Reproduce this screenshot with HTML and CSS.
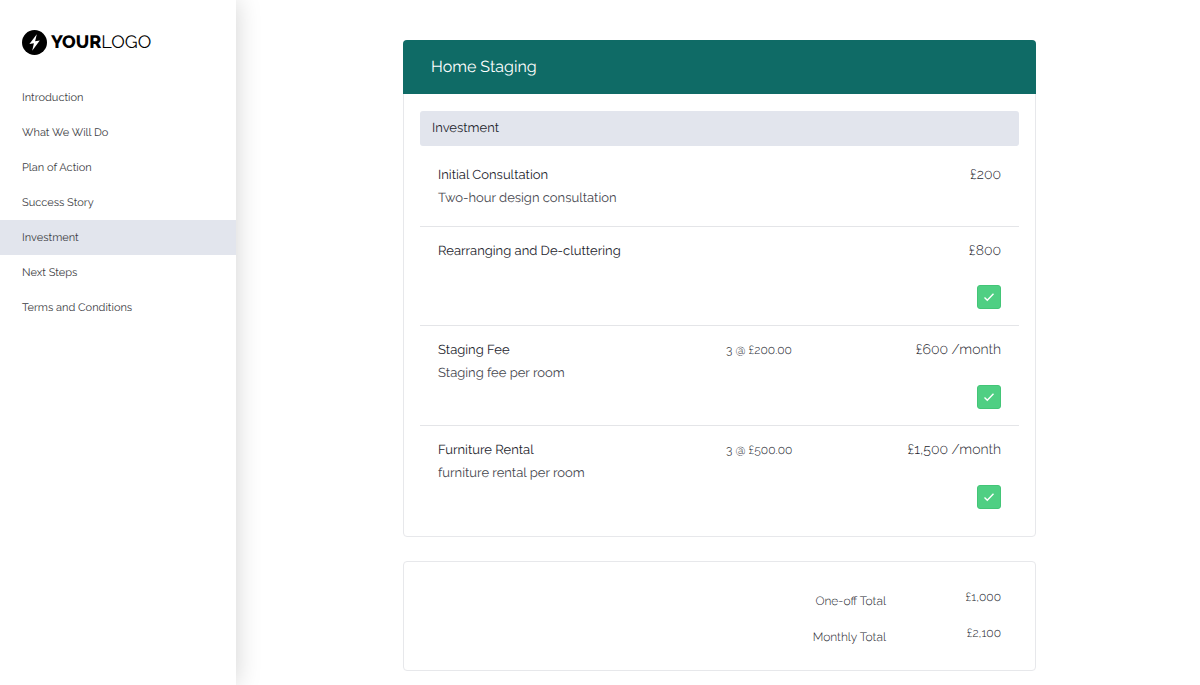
FILE: index.html
```
<!DOCTYPE html>
<html lang="en">
<head>
<meta charset="utf-8">
<meta name="viewport" content="width=device-width, initial-scale=1">
<title>Home Staging</title>
<link rel="stylesheet" href="styles.css">
</head>
<body>
<div class="layout">
  <aside class="sidebar">
    <a class="logo" href="#">
      <svg class="logo-mark" viewBox="0 0 25 25" aria-hidden="true"><circle cx="12.5" cy="12.5" r="12.5" fill="#000"/><path d="M14.8 4.2 7.4 13.9l4.5-.6-1.7 7.4 7.6-10.1-4.7.7z" fill="#fff"/></svg>
      <span class="logo-text"><b>YOUR</b>LOGO</span>
    </a>
    <nav class="menu">
      <a href="#">Introduction</a>
      <a href="#">What We Will Do</a>
      <a href="#">Plan of Action</a>
      <a href="#">Success Story</a>
      <a class="active" href="#" aria-current="page">Investment</a>
      <a href="#">Next Steps</a>
      <a href="#">Terms and Conditions</a>
    </nav>
  </aside>
  <main class="content">
    <section class="card">
      <h1 class="card-title">Home Staging</h1>
      <div class="card-body">
        <h2 class="section-title">Investment</h2>
        <ul class="items">
          <li class="item">
            <div class="details"><div class="name" id="item-1">Initial Consultation</div><div class="note">Two-hour design consultation</div></div>
            <div class="price">£200</div>
          </li>
          <li class="item">
            <div class="details"><div class="name" id="item-2">Rearranging and De-cluttering</div></div>
            <div class="price">£800</div>
            <div class="option"><input class="check" type="checkbox" aria-labelledby="item-2" checked><svg class="tick" viewBox="0 0 24 24" aria-hidden="true"><path d="M7.5 12.5l2.8 2.8 6.2-6.6"/></svg></div>
          </li>
          <li class="item">
            <div class="details"><div class="name" id="item-3">Staging Fee</div><div class="note">Staging fee per room</div></div>
            <div class="rate">3 @ £200.00</div>
            <div class="price">£600 /month</div>
            <div class="option"><input class="check" type="checkbox" aria-labelledby="item-3" checked><svg class="tick" viewBox="0 0 24 24" aria-hidden="true"><path d="M7.5 12.5l2.8 2.8 6.2-6.6"/></svg></div>
          </li>
          <li class="item">
            <div class="details"><div class="name" id="item-4">Furniture Rental</div><div class="note">furniture rental per room</div></div>
            <div class="rate">3 @ £500.00</div>
            <div class="price">£1,500 /month</div>
            <div class="option"><input class="check" type="checkbox" aria-labelledby="item-4" checked><svg class="tick" viewBox="0 0 24 24" aria-hidden="true"><path d="M7.5 12.5l2.8 2.8 6.2-6.6"/></svg></div>
          </li>
        </ul>
      </div>
    </section>
    <section class="card">
      <dl class="totals">
        <dt>One-off Total</dt><dd>£1,000</dd>
        <dt>Monthly Total</dt><dd>£2,100</dd>
      </dl>
    </section>
  </main>
</div>
</body>
</html>
```
FILE: styles.css
```
* { box-sizing: border-box; }
body {
  margin: 0;
  background: #fff;
  color: #24252d;
  font-family: Raleway, Lato, "Open Sans", sans-serif;
  font-size: 13px;
  font-weight: 400;
  line-height: 23px;
  text-rendering: geometricPrecision;
}
.layout { display: flex; min-height: 100vh; }
.sidebar {
  flex: 0 0 236px;
  padding-top: 30px;
  background: #fff;
  box-shadow: 0 0 24px rgba(0, 0, 0, 0.18);
}
.logo {
  display: flex;
  align-items: center;
  gap: 4px;
  padding: 0 22px;
  color: #000;
  text-decoration: none;
}
.logo-mark { width: 25px; height: 25px; }
.logo-text { font-size: 18px; }
.logo-text b { font-weight: 800; }
.menu { display: flex; flex-direction: column; margin-top: 25px; }
.menu a {
  padding: 6px 22px;
  color: #3c3d43;
  font-size: 11px;
  text-decoration: none;
}
.menu .active { background: #e2e5ed; }
.content {
  flex: 1;
  display: flex;
  flex-direction: column;
  align-items: center;
  gap: 24px;
  padding: 40px 24px 14px 27px;
}
.card {
  width: 100%;
  max-width: 633px;
  border: 1px solid #e7e8eb;
  border-radius: 4px;
}
.card-title {
  margin: -1px -1px 0;
  padding: 15px 28px;
  border-radius: 4px 4px 0 0;
  background: #0f6b66;
  color: #fff;
  font-size: 16px;
  font-weight: 400;
  line-height: 24px;
}
.card-body { padding: 17px 16px 11px; }
.section-title {
  margin: 0 0 5px;
  padding: 6px 12px;
  border-radius: 3px;
  background: #e2e5ed;
  font-size: 13px;
  font-weight: 400;
}
.items { margin: 0; padding: 0; list-style: none; }
.item {
  display: grid;
  grid-template-columns: 288px 1fr auto;
  padding: 13px 18px 16px;
}
.item + .item { border-top: 1px solid #e4e5e8; }
.details { min-height: 45px; grid-column: 1; }
.note { color: #474850; }
.rate { grid-column: 2; font-size: 12px; font-weight: 300; }
.price { grid-column: 3; font-size: 14px; font-weight: 300; text-align: right; }
.option { grid-column: 3; justify-self: end; display: grid; }
.check, .tick { grid-area: 1 / 1; width: 24px; height: 24px; margin: 0; }
.check {
  appearance: none;
  border: 1px solid #43c577;
  border-radius: 3px;
  background: #4fcf83;
}
.tick { fill: none; stroke: #fff; stroke-width: 1.4; pointer-events: none; }
.totals {
  display: grid;
  grid-template-columns: 1fr 115px;
  row-gap: 9px;
  margin: 0;
  padding: 24px 34px 21px;
  font-size: 12px;
  font-weight: 300;
}
.totals dt, .totals dd { margin: 0; text-align: right; }
.totals dt { padding-top: 4px; }
```
